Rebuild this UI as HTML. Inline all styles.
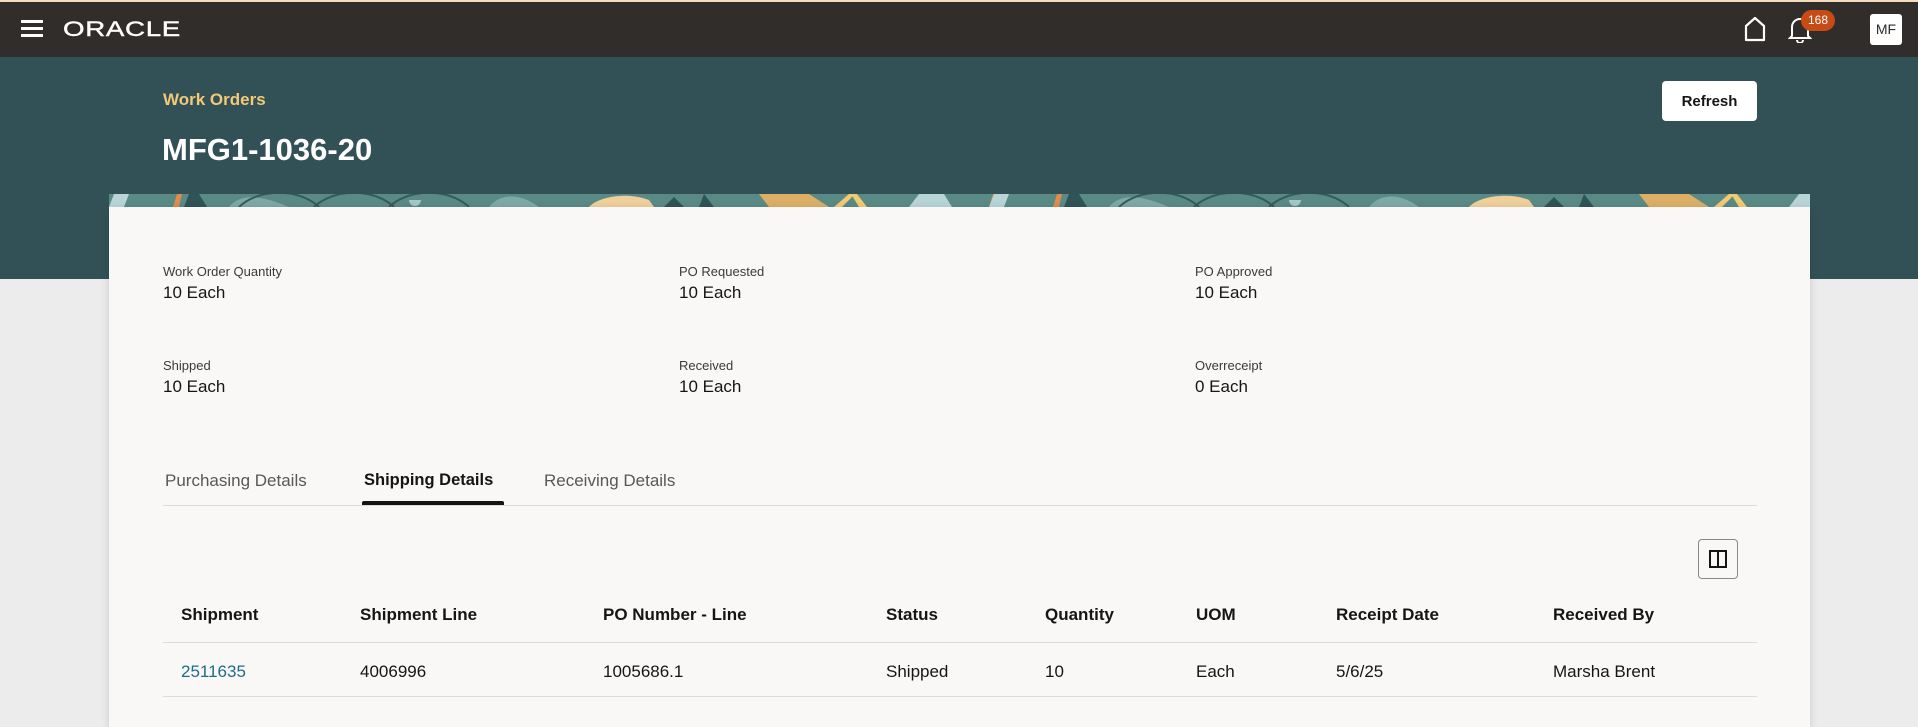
<!DOCTYPE html>
<html><head><meta charset="utf-8"><style>
*{margin:0;padding:0;box-sizing:border-box}
body{width:1918px;height:721px;overflow:hidden;background:#ececec;font-family:"Liberation Sans",sans-serif;position:relative;color:#161513}
.top{position:absolute;left:0;top:0;width:1918px;height:57px;background:#312d2a;border-top:2px solid #f6dcb8}
.teal{position:absolute;left:0;top:57px;width:1918px;height:222px;background:#325157}
.abs{position:absolute}
.card{position:absolute;left:109px;top:207px;width:1701px;height:520px;background:#f9f8f6;box-shadow:0 2px 8px rgba(0,0,0,.15)}
.lbl{position:absolute;font-size:13px;color:#3c3a38}
.val{position:absolute;font-size:17px;color:#161513}
.tab{position:absolute;top:471px;font-size:17px;color:#5a5856}
.th{position:absolute;top:605px;font-size:17px;font-weight:bold;color:#161513}
.td{position:absolute;top:662px;font-size:17px;color:#161513}
</style></head><body>
<div class="top"></div>
<div class="abs" style="left:21px;top:20px;width:22px;height:3px;background:#fff;box-shadow:0 7px 0 #fff,0 14px 0 #fff"></div>
<div class="abs" style="left:63px;top:18px;color:#fff;font-size:21px;letter-spacing:0.5px;transform:scaleX(1.32);transform-origin:left;-webkit-text-stroke:0.4px #fff">ORACLE</div>
<svg class="abs" style="left:1743px;top:16px" width="24" height="26" viewBox="0 0 24 26"><path d="M3 24V10L12 2l9 8v14z" fill="none" stroke="#fff" stroke-width="2.2" stroke-linejoin="round"/></svg>
<svg class="abs" style="left:1788px;top:15px" width="24" height="28" viewBox="0 0 24 28"><path d="M4 21V12a8 8 0 0 1 16 0v9l2 2H2z" fill="none" stroke="#fff" stroke-width="2"/><path d="M9 25a3 3 0 0 0 6 0" fill="none" stroke="#fff" stroke-width="2"/></svg>
<div class="abs" style="left:1801px;top:10px;width:34px;height:21px;border-radius:11px;background:#c74b14;color:#fff;font-size:12px;text-align:center;line-height:21px">168</div>
<div class="abs" style="left:1870px;top:14px;width:32px;height:31px;border-radius:3px;background:#fff;color:#312d2a;font-size:14px;text-align:center;line-height:31px">MF</div>
<div class="teal"></div>
<div class="abs" style="left:163px;top:90px;color:#f3c879;font-size:17px;font-weight:bold">Work Orders</div>
<div class="abs" style="left:162px;top:132px;color:#fff;font-size:31px;font-weight:bold">MFG1-1036-20</div>
<div class="abs" style="left:1662px;top:81px;width:95px;height:40px;background:#fff;border-radius:4px;font-size:15px;font-weight:bold;text-align:center;line-height:41px">Refresh</div>
<svg class="abs" style="left:109px;top:194px" width="1701" height="13" viewBox="0 0 1701 13" preserveAspectRatio="none">
<rect width="1701" height="13" fill="#5a8a86"/>
<g id="p">
<path d="M0 13 L5 0 H20 L15 13z" fill="#b7d4d6"/>
<path d="M64 13 L68 0 H73 L70 13z" fill="#e08b4e"/>
<path d="M75 13 L80 0 H90 L98 13z" fill="#2f5357"/>
<path d="M120 13 C130 0 150 0 180 13z" fill="#7ea9a8"/>
<path d="M130 13 C150 -6 190 -6 210 13" fill="none" stroke="#335a5c" stroke-width="2"/>
<path d="M205 13 C225 -6 265 -6 285 13" fill="none" stroke="#335a5c" stroke-width="2"/>
<path d="M280 13 C300 -6 340 -6 360 13" fill="none" stroke="#335a5c" stroke-width="2"/>
<path d="M300 6 a6 6 0 1 0 12 0z" fill="#a5c7c8"/>
<path d="M380 13 C390 0 410 -2 430 13z" fill="#7ea9a8"/>
<path d="M480 13 C490 2 520 -2 540 6 L545 13z" fill="#efcf9c"/>
<path d="M555 13 L565 3 L575 13z" fill="#2f5357"/>
<path d="M590 13 L595 0 L605 13z" fill="#2f5357"/>
<path d="M660 13 L650 0 H700 L720 13z" fill="#dcaf66"/>
<path d="M725 13 L740 0 H746 L733 13z" fill="#f2ca72"/>
<path d="M750 13 L742 0 H748 L758 13z" fill="#f2ca72"/>
<path d="M800 13 L810 0 H835 L843 13z" fill="#b7d4d6"/>
<path d="M880 13 L884 0 H890 L886 13z" fill="#e08b4e"/>
</g>
<use href="#p" x="880"/>
</svg>
<div class="card"></div>
<div class="lbl" style="left:163px;top:264px">Work Order Quantity</div>
<div class="val" style="left:163px;top:283px">10 Each</div>
<div class="lbl" style="left:679px;top:264px">PO Requested</div>
<div class="val" style="left:679px;top:283px">10 Each</div>
<div class="lbl" style="left:1195px;top:264px">PO Approved</div>
<div class="val" style="left:1195px;top:283px">10 Each</div>
<div class="lbl" style="left:163px;top:358px">Shipped</div>
<div class="val" style="left:163px;top:377px">10 Each</div>
<div class="lbl" style="left:679px;top:358px">Received</div>
<div class="val" style="left:679px;top:377px">10 Each</div>
<div class="lbl" style="left:1195px;top:358px">Overreceipt</div>
<div class="val" style="left:1195px;top:377px">0 Each</div>
<div class="tab" style="left:165px">Purchasing Details</div>
<div class="tab" style="left:364px;color:#161513;font-weight:bold;font-size:16.5px">Shipping Details</div>
<div class="tab" style="left:544px">Receiving Details</div>
<div class="abs" style="left:163px;top:505px;width:1594px;height:1px;background:#dddbd8"></div>
<div class="abs" style="left:362px;top:501px;width:142px;height:4px;background:#161513;border-radius:2px 2px 0 0"></div>
<div class="abs" style="left:1698px;top:539px;width:40px;height:40px;border:1px solid #8a8886;border-radius:4px"></div>
<div class="abs" style="left:1709px;top:550px;width:18px;height:18px;border:2px solid #161513"></div>
<div class="abs" style="left:1717px;top:550px;width:2px;height:18px;background:#161513"></div>
<div class="th" style="left:181px">Shipment</div>
<div class="th" style="left:360px">Shipment Line</div>
<div class="th" style="left:603px">PO Number - Line</div>
<div class="th" style="left:886px">Status</div>
<div class="th" style="left:1045px">Quantity</div>
<div class="th" style="left:1196px">UOM</div>
<div class="th" style="left:1336px">Receipt Date</div>
<div class="th" style="left:1553px">Received By</div>
<div class="abs" style="left:163px;top:642px;width:1594px;height:1px;background:#dddbd8"></div>
<div class="td" style="left:181px;color:#1e6c8b">2511635</div>
<div class="td" style="left:360px">4006996</div>
<div class="td" style="left:603px">1005686.1</div>
<div class="td" style="left:886px">Shipped</div>
<div class="td" style="left:1045px">10</div>
<div class="td" style="left:1196px">Each</div>
<div class="td" style="left:1336px">5/6/25</div>
<div class="td" style="left:1553px">Marsha Brent</div>
<div class="abs" style="left:163px;top:696px;width:1594px;height:1px;background:#dddbd8"></div>
</body></html>
